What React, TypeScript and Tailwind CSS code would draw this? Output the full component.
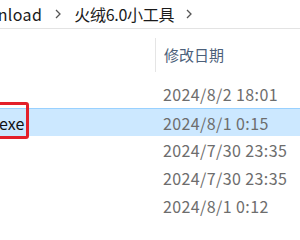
import React from "react"

const dates = ["2024/8/2 18:01", "2024/8/1 0:15", "2024/7/30 23:35", "2024/7/30 23:35", "2024/8/1 0:12"]

const Chevron: React.FC = () => (
  <svg width="8" height="12" viewBox="0 0 8 12" className="shrink-0">
    <path d="M2 2 L6 6 L2 10" fill="none" stroke="#555" strokeWidth="1.3" />
  </svg>
)

export default function App() {
  return (
    <div
      className="relative w-[300px] h-[240px] overflow-hidden bg-white"
      style={{ fontFamily: '"Noto Sans CJK SC", "Noto Sans", sans-serif' }}
    >
      {/* 地址栏 */}
      <div className="h-[29px] border-b border-[#e3e3e3] flex items-center overflow-hidden">
        <div className="flex items-center ml-[-37px] text-[16px] text-[#1a1a1a] whitespace-nowrap">
          <span className="tracking-[0.4px]">Download</span>
          <span className="mx-[12px]"><Chevron /></span>
          <span className="tracking-[-0.3px]">火绒6.0小工具</span>
          <span className="ml-[11px]"><Chevron /></span>
        </div>
      </div>

      {/* 列头 */}
      <div className="mt-[9px] h-[34px] flex">
        <div className="w-[155px]" />
        <div className="border-l border-[#e5e5e5] pl-[8px] flex items-center text-[15px] text-[#4c607a]">修改日期</div>
      </div>

      {/* 文件行 */}
      <div className="mt-[8px] flex flex-col">
        {dates.map((d, i) => (
          <div
            key={i}
            className={`h-[28px] flex items-center ${i === 1 ? "bg-[#cce8ff] border-t border-[#99d1ff]" : ""}`}
          >
            <div className="w-[163px] text-[16px] text-[#111]">{i === 1 ? <span className="ml-[-1px]">exe</span> : null}</div>
            <div className="text-[16px] tracking-[0.4px] text-[#6d6d6d]">{d}</div>
          </div>
        ))}
      </div>

      {/* 红框标注 */}
      <div className="absolute left-[-10px] top-[102px] w-[39px] h-[37px] border-[3px] border-[#e3202a] rounded-[3px]" />
    </div>
  )
}
